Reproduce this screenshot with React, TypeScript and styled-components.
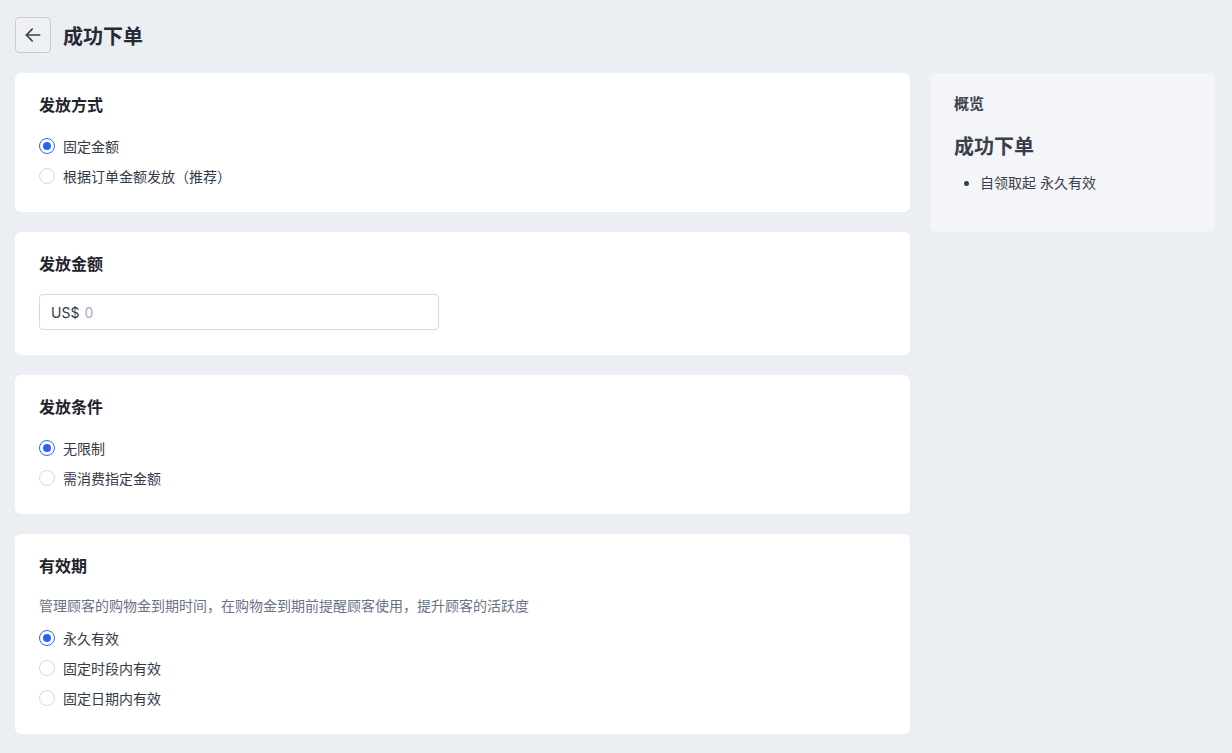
import React from "react";
import styled, { createGlobalStyle } from "styled-components";

const GlobalStyle = createGlobalStyle`
  html, body {
    margin: 0;
    padding: 0;
    background: #ebeef2;
    font-family: "Inter", "Noto Sans CJK SC", sans-serif;
    color: #343a46;
  }
  * {
    box-sizing: border-box;
  }
`;

const Page = styled.div`
  padding: 17px 17px 18px 15px;
  min-height: 753px;
`;

const Header = styled.div`
  display: flex;
  align-items: center;
  gap: 12px;
  height: 36px;
  margin-bottom: 20px;
`;

const BackButton = styled.button`
  width: 36px;
  height: 36px;
  display: flex;
  align-items: center;
  justify-content: center;
  border: 1px solid #c6cbd6;
  border-radius: 4px;
  background: #eef0f4;
  padding: 0;
  color: #3b4150;
  cursor: pointer;
`;

const PageTitle = styled.h1`
  margin: 0;
  font-size: 20px;
  font-weight: 700;
  color: #262b36;
`;

const Layout = styled.div`
  display: grid;
  grid-template-columns: 895px 285px;
  gap: 20px;
  align-items: start;
`;

const Column = styled.div`
  display: flex;
  flex-direction: column;
  gap: 20px;
`;

const Card = styled.section<{ $muted?: boolean }>`
  display: flex;
  flex-direction: column;
  align-items: flex-start;
  background: ${(p) => (p.$muted ? "#f4f5f8" : "#ffffff")};
  border-radius: 6px;
  padding: 20px 24px 21px;
`;

const CardTitle = styled.h2<{ $flush?: boolean }>`
  margin: 0 0 ${(p) => (p.$flush ? "0" : "14px")};
  font-size: 16px;
  line-height: 24px;
  font-weight: 700;
  color: #1f232b;
`;

const Description = styled.p`
  margin: 3px 0 6px;
  font-size: 14px;
  line-height: 22px;
  color: #6a7284;
`;

const RadioList = styled.div`
  display: flex;
  flex-direction: column;
`;

const RadioRow = styled.label`
  display: flex;
  align-items: center;
  gap: 8px;
  height: 30px;
  font-size: 14px;
  color: #343a46;
`;

const RadioDot = styled.span<{ $checked?: boolean }>`
  width: 16px;
  height: 16px;
  border-radius: 50%;
  border: 1px solid ${(p) => (p.$checked ? "#2a64f6" : "#d5d9e2")};
  background: #fff;
  display: flex;
  align-items: center;
  justify-content: center;
  flex-shrink: 0;

  &::after {
    content: "";
    width: 8px;
    height: 8px;
    border-radius: 50%;
    background: ${(p) => (p.$checked ? "#2a64f6" : "transparent")};
  }
`;

const AmountInput = styled.div`
  width: 400px;
  height: 36px;
  margin-top: 18px;
  margin-bottom: 4px;
  border: 1px solid #d3d8e2;
  border-radius: 4px;
  display: flex;
  align-items: center;
  gap: 5px;
  padding: 0 11px;
  font-size: 14px;
`;

const Prefix = styled.span`
  color: #343a46;
`;

const Placeholder = styled.span`
  color: #a6aec0;
`;

const OverviewTitle = styled.h3`
  margin: 0 0 18px;
  font-size: 15px;
  line-height: 22px;
  font-weight: 700;
  color: #3a3f4b;
`;

const OverviewName = styled.div`
  font-size: 20px;
  line-height: 28px;
  font-weight: 600;
  color: #3a3f4b;
  margin-bottom: 12px;
`;

const Bullets = styled.ul`
  margin: 0 0 18px;
  padding-left: 26px;
  font-size: 14px;
  line-height: 20px;
  color: #3a3f4b;
`;

type Option = { label: string; checked?: boolean };

const Radios: React.FC<{ options: Option[] }> = ({ options }) => (
  <RadioList>
    {options.map((o) => (
      <RadioRow key={o.label}>
        <RadioDot $checked={o.checked} />
        {o.label}
      </RadioRow>
    ))}
  </RadioList>
);

const App: React.FC = () => {
  return (
    <Page>
      <GlobalStyle />
      <Header>
        <BackButton aria-label="返回">
          <svg width="20" height="20" viewBox="0 0 24 24" fill="none" stroke="currentColor" strokeWidth="2" strokeLinecap="round" strokeLinejoin="round">
            <path d="M20 12H4" />
            <path d="M11 19l-7-7 7-7" />
          </svg>
        </BackButton>
        <PageTitle>成功下单</PageTitle>
      </Header>
      <Layout>
        <Column>
          <Card>
            <CardTitle>发放方式</CardTitle>
            <Radios
              options={[
                { label: "固定金额", checked: true },
                { label: "根据订单金额发放（推荐）" },
              ]}
            />
          </Card>
          <Card>
            <CardTitle $flush>发放金额</CardTitle>
            <AmountInput>
              <Prefix>US$</Prefix>
              <Placeholder>0</Placeholder>
            </AmountInput>
          </Card>
          <Card>
            <CardTitle>发放条件</CardTitle>
            <Radios
              options={[
                { label: "无限制", checked: true },
                { label: "需消费指定金额" },
              ]}
            />
          </Card>
          <Card>
            <CardTitle>有效期</CardTitle>
            <Description>
              管理顾客的购物金到期时间，在购物金到期前提醒顾客使用，提升顾客的活跃度
            </Description>
            <Radios
              options={[
                { label: "永久有效", checked: true },
                { label: "固定时段内有效" },
                { label: "固定日期内有效" },
              ]}
            />
          </Card>
        </Column>
        <Card $muted>
          <OverviewTitle>概览</OverviewTitle>
          <OverviewName>成功下单</OverviewName>
          <Bullets>
            <li>自领取起 永久有效</li>
          </Bullets>
        </Card>
      </Layout>
    </Page>
  );
};

export default App;
